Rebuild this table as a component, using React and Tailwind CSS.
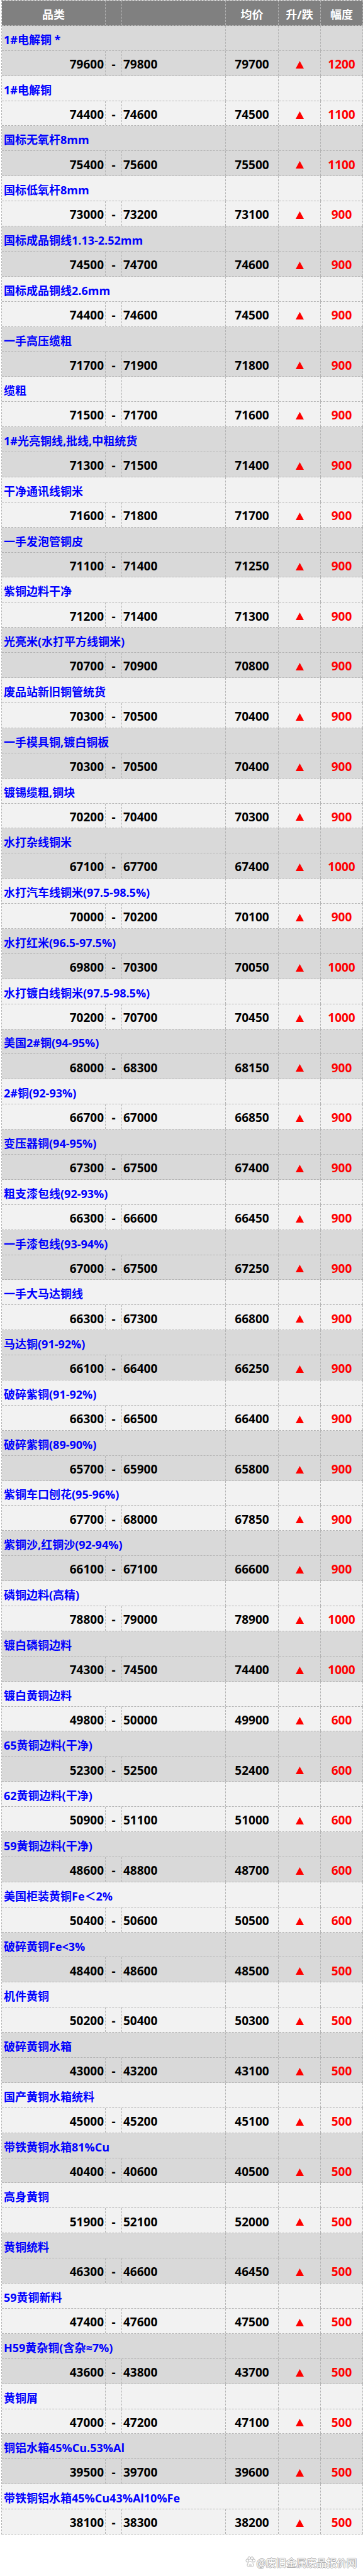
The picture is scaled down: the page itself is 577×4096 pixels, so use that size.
import React from "react";

// [品类, 低价, 高价, 均价, 涨幅, 标题格式]
const items = [
  ["1#电解铜 *", 79600, 79800, 79700, 1200],
  ["1#电解铜", 74400, 74600, 74500, 1100],
  ["国标无氧杆8mm", 75400, 75600, 75500, 1100],
  ["国标低氧杆8mm", 73000, 73200, 73100, 900],
  ["国标成品铜线1.13-2.52mm", 74500, 74700, 74600, 900],
  ["国标成品铜线2.6mm", 74400, 74600, 74500, 900],
  ["一手高压缆粗", 71700, 71900, 71800, 900],
  ["缆粗", 71500, 71700, 71600, 900, "split"],
  ["1#光亮铜线,批线,中粗统货", 71300, 71500, 71400, 900],
  ["干净通讯线铜米", 71600, 71800, 71700, 900],
  ["一手发泡管铜皮", 71100, 71400, 71250, 900],
  ["紫铜边料干净", 71200, 71400, 71300, 900],
  ["光亮米(水打平方线铜米)", 70700, 70900, 70800, 900],
  ["废品站新旧铜管统货", 70300, 70500, 70400, 900],
  ["一手模具铜,镀白铜板", 70300, 70500, 70400, 900],
  ["镀锡缆粗,铜块", 70200, 70400, 70300, 900],
  ["水打杂线铜米", 67100, 67700, 67400, 1000],
  ["水打汽车线铜米(97.5-98.5%)", 70000, 70200, 70100, 900],
  ["水打红米(96.5-97.5%)", 69800, 70300, 70050, 1000],
  ["水打镀白线铜米(97.5-98.5%)", 70200, 70700, 70450, 1000],
  ["美国2#铜(94-95%)", 68000, 68300, 68150, 900],
  ["2#铜(92-93%)", 66700, 67000, 66850, 900],
  ["变压器铜(94-95%)", 67300, 67500, 67400, 900],
  ["粗支漆包线(92-93%)", 66300, 66600, 66450, 900],
  ["一手漆包线(93-94%)", 67000, 67500, 67250, 900],
  ["一手大马达铜线", 66300, 67300, 66800, 900],
  ["马达铜(91-92%)", 66100, 66400, 66250, 900],
  ["破碎紫铜(91-92%)", 66300, 66500, 66400, 900],
  ["破碎紫铜(89-90%)", 65700, 65900, 65800, 900],
  ["紫铜车口刨花(95-96%)", 67700, 68000, 67850, 900],
  ["紫铜沙,红铜沙(92-94%)", 66100, 67100, 66600, 900],
  ["磷铜边料(高精)", 78800, 79000, 78900, 1000],
  ["镀白磷铜边料", 74300, 74500, 74400, 1000],
  ["镀白黄铜边料", 49800, 50000, 49900, 600],
  ["65黄铜边料(干净)", 52300, 52500, 52400, 600],
  ["62黄铜边料(干净)", 50900, 51100, 51000, 600],
  ["59黄铜边料(干净)", 48600, 48800, 48700, 600],
  ["美国柜装黄铜Fe＜2%", 50400, 50600, 50500, 600],
  ["破碎黄铜Fe<3%", 48400, 48600, 48500, 500],
  ["机件黄铜", 50200, 50400, 50300, 500],
  ["破碎黄铜水箱", 43000, 43200, 43100, 500],
  ["国产黄铜水箱统料", 45000, 45200, 45100, 500],
  ["带铁黄铜水箱81%Cu", 40400, 40600, 40500, 500],
  ["高身黄铜", 51900, 52100, 52000, 500],
  ["黄铜统料", 46300, 46600, 46450, 500],
  ["59黄铜新料", 47400, 47600, 47500, 500],
  ["H59黄杂铜(含杂≈7%)", 43600, 43800, 43700, 500],
  ["黄铜屑", 47000, 47200, 47100, 500, "split"],
  ["铜铝水箱45%Cu.53%Al", 39500, 39700, 39600, 500],
  ["带铁铜铝水箱45%Cu43%Al10%Fe", 38100, 38300, 38200, 500, "wide"],
];

const row = "flex h-[39.9px] border-b border-dashed border-[#b3b3b3]";
const cell = "h-full flex items-center border-r border-dashed border-[#b3b3b3]";

const Up = () => (
  <svg width="13" height="12" viewBox="0 0 13 12">
    <path d="M6.5 0L13 12H0Z" fill="#ff0000" />
  </svg>
);

const Paw = () => (
  <svg width="16" height="17" viewBox="0 0 16 17" fill="white" stroke="#b5b5b5" strokeWidth="1">
    <ellipse cx="3" cy="6.5" rx="2" ry="2.6" />
    <ellipse cx="6" cy="2.8" rx="2" ry="2.4" />
    <ellipse cx="10.5" cy="2.8" rx="2" ry="2.4" />
    <ellipse cx="13.5" cy="6.5" rx="2" ry="2.6" />
    <path d="M8 8C5.5 8 3.5 11 3 13c-.5 2 1 3.5 3 3.3 1 0 1.5-.4 2-.4s1 .4 2 .4c2 .2 3.5-1.3 3-3.3C12.5 11 10.5 8 8 8Z" />
    <text x="5.6" y="14.6" fontSize="4.5" fill="#b5b5b5" stroke="none" fontFamily="Liberation Sans">du</text>
  </svg>
);

const Item = ({ data, dark }) => {
  const [name, low, high, avg, chg, mode] = data;
  const bg = dark ? "bg-[#d9d9d9]" : "bg-[#f2f2f2]";
  const title = "text-[#0000ff] font-bold text-[18px] whitespace-nowrap pl-[3px] pt-[6px]";
  return (
    <div className={bg}>
      {/* 品名行 */}
      <div className={row}>
        {mode === "split" ? (
          <>
            <div className={`${cell} w-[165px] ${title}`}>{name}</div>
            <div className={`${cell} w-[26px]`} />
            <div className={`${cell} w-[165px]`} />
          </>
        ) : mode === "wide" ? (
          <div className={`${cell} w-[440px] ${title}`}>{name}</div>
        ) : (
          <div className={`${cell} w-[356px] ${title}`}>{name}</div>
        )}
        {mode !== "wide" && <div className={`${cell} w-[84px]`} />}
        <div className={`${cell} w-[67px]`} />
        <div className={`${cell} w-[67px]`} />
      </div>

      {/* 价格行 */}
      <div className={`${row} text-[19px] font-bold text-black`}>
        <div className={`${cell} w-[165px] justify-end pr-[2px] pt-[4px]`}>{low}</div>
        <div className={`${cell} w-[26px] justify-center pt-[4px]`}>-</div>
        <div className={`${cell} w-[165px] pl-[2px] pt-[4px]`}>{high}</div>
        <div className={`${cell} w-[84px] justify-center pt-[4px]`}>{avg}</div>
        <div className={`${cell} w-[67px] justify-center pt-[5px]`}>
          <Up />
        </div>
        <div className={`${cell} w-[67px] justify-center pt-[4px] text-[#ff0000]`}>{chg}</div>
      </div>
    </div>
  );
};

export default function App() {
  return (
    <div className="w-[577px] h-[4096px] bg-white font-['Open_Sans','Noto_Sans_CJK_SC',sans-serif] overflow-hidden">
      <div className="ml-[2px] w-[575px] border-l border-t border-dashed border-[#b3b3b3]">
        {/* 表头 */}
        <div className={`${row} bg-[#808080] text-white font-bold text-[18px]`}>
          <div className={`${cell} w-[165px] justify-center pt-[6px]`}>品类</div>
          <div className={`${cell} w-[26px]`} />
          <div className={`${cell} w-[165px]`} />
          <div className={`${cell} w-[84px] justify-center pt-[6px]`}>均价</div>
          <div className={`${cell} w-[67px] justify-center pt-[6px]`}>升/跌</div>
          <div className={`${cell} w-[67px] justify-center pt-[6px]`}>幅度</div>
        </div>

        {items.map((it, i) => (
          <Item key={i} data={it} dark={i % 2 === 0} />
        ))}
      </div>

      {/* 水印 */}
      <div className="flex justify-end items-center gap-[2px] pr-[10px] mt-[32px]">
        <Paw />
        <span className="text-white text-[16px] font-['Noto_Sans_CJK_SC',sans-serif] [text-shadow:1px_0_#b0b0b0,-1px_0_#b0b0b0,0_1px_#b0b0b0,0_-1px_#b0b0b0]">
          @废旧金属废品报价网
        </span>
      </div>
    </div>
  );
}
